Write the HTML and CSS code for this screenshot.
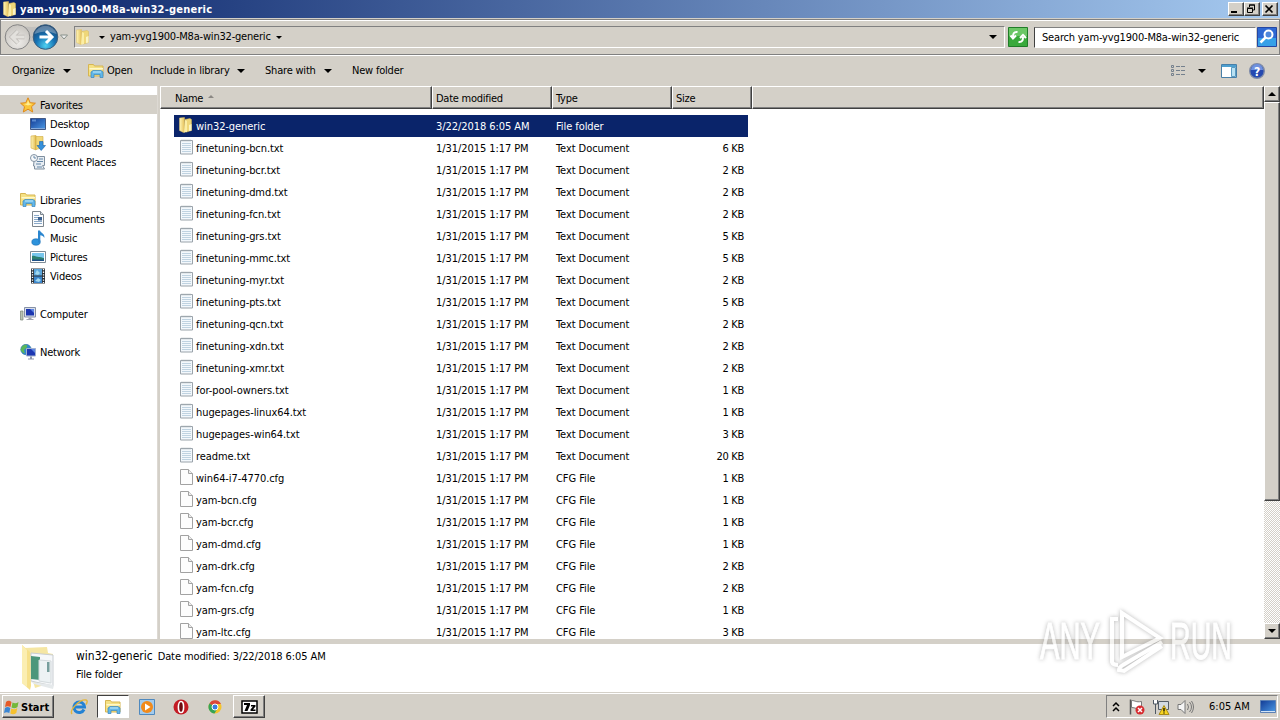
FILE: index.html
```html
<!DOCTYPE html>
<html lang="en">
<head>
  <meta charset="UTF-8">
  <title>yam-yvg1900-M8a-win32-generic</title>
  <link rel="stylesheet" href="styles.css">
</head>
<body>
  <svg class="defs" width="0" height="0">
    <defs>
      <linearGradient id="gold" x1="0" y1="0" x2="1" y2="0"><stop offset="0" stop-color="#fff6b8"/><stop offset="1" stop-color="#e2bb50"/></linearGradient>
      <linearGradient id="screen" x1="0" y1="0" x2="1" y2="1"><stop offset="0" stop-color="#123a94"/><stop offset="1" stop-color="#4d9be6"/></linearGradient>
      <radialGradient id="orb" cx=".5" cy=".85" r=".8"><stop offset="0" stop-color="#4fd0f0"/><stop offset=".5" stop-color="#1672b4"/><stop offset="1" stop-color="#1b4674"/></radialGradient>
      <radialGradient id="orb-off" cx=".5" cy=".7" r=".7"><stop offset="0" stop-color="#efedea"/><stop offset="1" stop-color="#c6c3be"/></radialGradient>
      <symbol id="folder" viewBox="0 0 16 16">
        <path d="M1.500 1l5-.5.500 14.500-1.500.5-4-2z" fill="url(#gold)" stroke="#e0c266" stroke-width=".5"/>
        <path d="M7 2.500l5-1 1.500 1v11l-5 1.500-1.500-1z" fill="#efd779" stroke="#d9b856" stroke-width=".5"/>
        <path d="M7 3l2 1v11l-3 .5z" fill="#fbeea6"/>
        <path d="M11 8l2.500-1v6.500l-2.500.5z" fill="#fbf4c4"/>
      </symbol>
      <symbol id="library" viewBox="0 0 16 16">
        <path d="M.5 1.500h5l1 1.500h8.500v10h-14.500z" fill="#f5e184" stroke="#d6b552"/>
        <path d="M1.500 5h13.500v1.500h-13.500z" fill="#fff8c8"/>
        <path d="M3 14.500v-5.500l2-1.500h8l2 1.500v5.500h-3v-3h-6v3z" fill="#63b7e8" stroke="#3885bd" stroke-width=".7"/>
        <path d="M5 9h8" stroke="#c5ebfb"/>
      </symbol>
      <symbol id="txt" viewBox="0 0 16 16">
        <path d="M2.500 1.500h12v13.500h-12z" fill="#f3f8fc" stroke="#9aa3aa"/>
        <path d="M4 .5v2m2-2v2m2-2v2m2-2v2m2-2v2" stroke="#a5adb4" stroke-width=".8"/>
        <path d="M4 4.500h9M4 6.500h9M4 8.500h9M4 10.500h9M4 12.500h9" stroke="#c0d3e1"/>
      </symbol>
      <symbol id="cfg" viewBox="0 0 16 16">
        <path d="M2.500.5h8l4 4v11h-12z" fill="#fdfdfd" stroke="#a2a2a2"/>
        <path d="M10.500.5v4h4" fill="#eee" stroke="#a2a2a2"/>
      </symbol>
      <symbol id="star" viewBox="0 0 16 16">
        <path d="M8 .8l2.200 4.900 5.200.5-3.900 3.500 1.200 5.300-4.700-2.800-4.700 2.800 1.200-5.300-3.900-3.500 5.200-.5z" fill="#fbc63a" stroke="#df8a1c"/>
        <path d="M8 3l1.300 3.500 3 .6-4.300 1.500-4-1.500 3-.6z" fill="#ffed92"/>
      </symbol>
      <symbol id="desktop" viewBox="0 0 16 16">
        <path d="M.5 2.500h15v11h-15z" fill="url(#screen)" stroke="#435a86"/>
        <path d="M1 12.500h14" stroke="#83a9dc"/><path d="M2 3.500h4v2h-4z" fill="#5a8bd0"/>
      </symbol>
      <symbol id="downloads" viewBox="0 0 16 16">
        <path d="M1 1l5-.5v14.500l-5-2z" fill="url(#gold)" stroke="#d0a83e" stroke-width=".6"/>
        <path d="M6 1.500h7v11l-7 2z" fill="#f1d878" stroke="#cfa940" stroke-width=".6"/>
        <path d="M9.500 6.500h3.500v4h2.500l-4.300 5-4.200-5h2.500z" fill="#3590db" stroke="#1b63a7" stroke-width=".6"/>
      </symbol>
      <symbol id="recent" viewBox="0 0 16 16">
        <path d="M4.500 2.500h10v9h-2l2 3.500h-10v-3h-1z" fill="#e7edf3" stroke="#7f8f9f"/>
        <circle cx="4" cy="4" r="3.500" fill="#f7f9fb" stroke="#8494a4"/>
        <path d="M4 1.800v2.200h2M9 5h4M7 7.500h6M6 10h5M7 13h5" stroke="#6487a7" fill="none"/>
      </symbol>
      <symbol id="documents" viewBox="0 0 16 16">
        <path d="M2.500.5h8l3 3v12h-11z" fill="#fbfcfd" stroke="#7c858d"/><path d="M10.500.5v3h3" fill="#d7e0e7" stroke="#7c858d"/>
        <path d="M4 4.500h5M4 6.500h4M4 8.500h4M4 10.500h8M4 12.500h8" stroke="#8aa9c9"/><path d="M8 6h4v3.500h-4z" fill="#3a608f"/>
      </symbol>
      <symbol id="music" viewBox="0 0 16 16">
        <ellipse cx="6" cy="12" rx="4.200" ry="3.200" fill="#2e93dc" stroke="#176aae" stroke-width=".6"/>
        <path d="M8 12.500v-12h2c.3 2.500 5.300 3 4.300 7.500-.8-2-2.300-2.500-4-2.700v7.200z" fill="#2b86cf"/>
      </symbol>
      <symbol id="pictures" viewBox="0 0 16 16">
        <path d="M.5 2.500h15v11h-15z" fill="#fff" stroke="#7e8b96"/><path d="M2 4h12v8h-12z" fill="#78c6ec"/>
        <path d="M2 12v-5c3-1 4 1 7 1s3 1 5 1v3z" fill="#2c806f"/><path d="M2 10.500h12v1.500h-12z" fill="#1d5087"/>
      </symbol>
      <symbol id="videos" viewBox="0 0 16 16">
        <path d="M1 .5h14v15h-14z" fill="#2a3139"/>
        <path d="M4 1h8v6.500h-8z" fill="#5aa6dc"/><path d="M4 8.500h8v6.500h-8z" fill="#3b86cc"/>
        <path d="M5 6l2-4 3 3-2 2zM5 13l3-3 3 2-2 2z" fill="#a3d9f0"/>
        <path d="M2.500 1v14M13.500 1v14" stroke="#fff" stroke-width="1.300" stroke-dasharray="1.300 1.300"/>
      </symbol>
      <symbol id="computer" viewBox="0 0 16 16">
        <path d="M.5 5h2.500v9h-2.500z" fill="#b9c4b4" stroke="#7a8577" stroke-width=".7"/>
        <path d="M4.500 1.500h11v9.500h-11z" fill="#d9dfea" stroke="#8590a6"/><path d="M6 3h8v6.500h-8z" fill="#1b36b0"/>
        <path d="M10 3h4v4z" fill="#5e86e4"/><path d="M8.500 11.500h3v1.500h2v1h-7v-1h2z" fill="#a0a5b2"/>
      </symbol>
      <symbol id="network" viewBox="0 0 16 16">
        <circle cx="6" cy="5.500" r="5.200" fill="#2f86cf" stroke="#316f9a" stroke-width=".6"/>
        <path d="M2 2.500c3-3 6-1.500 5 .5s-4 2-2.500 5-3 0-4-2z" fill="#5ab75a"/>
        <path d="M6.500 4.500h9v7.500h-9z" fill="#1c37b2" stroke="#a2b1d0"/><path d="M11 5h4v4z" fill="#5c86e2"/><path d="M10 12.500h2v2h2v1h-6v-1h2z" fill="#8d96ad"/>
      </symbol>
    </defs>
  </svg>

  <header class="title-bar">
    <svg class="icon"><use href="#folder"/></svg>
    <h1>yam-yvg1900-M8a-win32-generic</h1>
    <div class="window-buttons">
      <button class="bevel"><svg width="12" height="10"><path d="M2 7h6v2h-6z"/></svg></button>
      <button class="bevel"><svg width="12" height="10" fill="none" stroke="#000"><path d="M4.500 3v-2h5v5h-2M4 1h6M2.500 4.500h5v4h-5zM2 4h6"/></svg></button>
      <button class="bevel close"><svg width="12" height="10"><path d="M2.500 1.500l7 7m0-7l-7 7" stroke="#000" stroke-width="1.700"/></svg></button>
    </div>
  </header>

  <div class="address-bar">
    <svg class="nav" width="68" height="30">
      <path d="M14 3q14 4 28 0v20q-14-8-28 0z" fill="#c2c0bd"/>
      <circle cx="13.500" cy="15" r="12.300" fill="url(#orb-off)" stroke="#858585"/>
      <path d="M14 9l-6 6 6 6M8.500 15h12" fill="none" stroke="#bcb9b5" stroke-width="4.500"/>
      <path d="M14 9l-6 6 6 6M8.500 15h12" fill="none" stroke="#e3e1dd" stroke-width="3"/>
      <circle cx="41.500" cy="15" r="12.300" fill="url(#orb)" stroke="#3b5e7d"/>
      <path d="M30.500 12a11.500 11.500 0 0 1 22 0q-11-5-22 0z" fill="#fff" opacity=".3"/>
      <path d="M42 9l6 6-6 6M35.500 15h11" fill="none" stroke="#fff" stroke-width="3"/>
      <path d="M56.500 13h7l-3.500 4z" fill="#eee" stroke="#87908a"/>
    </svg>
    <div class="path">
      <svg class="icon"><use href="#folder"/></svg>
      <i class="caret small first"></i>
      <span>yam-yvg1900-M8a-win32-generic</span>
      <i class="caret small"></i>
      <i class="caret history"></i>
    </div>
    <svg class="refresh" width="20" height="20">
      <path d="M.5.5h19v19h-19z" fill="#39a93b" stroke="#207c28"/><path d="M1 1h18v8h-18z" fill="#6bc766"/>
      <path d="M9.500 5c-4-.5-4.500 2-4.500 5M2.500 8.500l2.500 3 3-3M10.500 15c4 .5 4.500-2 4.500-5M12 11l3-3 3 3" fill="none" stroke="#fff" stroke-width="2"/>
    </svg>
    <div class="search"><span>Search yam-yvg1900-M8a-win32-generic</span></div>
    <svg class="search-button" width="20" height="20">
      <path d="M.5.5h19v19h-19z" fill="#2e68d3" stroke="#2547a2"/><path d="M1 11h18v8h-18z" fill="#36a0e8"/>
      <circle cx="11.500" cy="7.500" r="4" fill="#4f87dc" stroke="#fff" stroke-width="2"/><path d="M8.500 10.500l-5 5" stroke="#fff" stroke-width="2.500"/>
    </svg>
  </div>

  <nav class="toolbar">
    <span class="organize">Organize</span><i class="caret"></i>
    <svg class="icon"><use href="#library"/></svg><span class="open">Open</span>
    <span class="include">Include in library</span><i class="caret"></i>
    <span class="share">Share with</span><i class="caret"></i>
    <span class="new-folder">New folder</span>
    <div class="view-tools">
      <svg width="16" height="14" fill="none"><path d="M1.500 1.500h2v2h-2zM1.500 5.500h2v2h-2zM1.500 9.500h2v2h-2z" stroke="#74808d"/><path d="M6 2.500h4m1 0h4M6 6.500h4m1 0h4M6 10.500h4m1 0h4" stroke="#74808d"/></svg>
      <i class="caret"></i>
      <svg class="pane" width="16" height="14"><path d="M.5.5h15v13h-15z" fill="#fff" stroke="#477fa8"/><path d="M1 1h14v2h-14z" fill="#4d9fcf"/><path d="M10.500 3.500h4v9h-4z" fill="#b9e1f3" stroke="#5b9bc1"/></svg>
      <svg class="help" width="16" height="16"><circle cx="8" cy="8" r="7.300" fill="#2549b0" stroke="#7e8ba8" stroke-width="1.400"/><path d="M2 7a6 6 0 0 1 12 0z" fill="#6f91df"/><text x="8" y="12.500" text-anchor="middle">?</text></svg>
    </div>
  </nav>

  <main class="explorer">
    <aside class="sidebar">
      <ul>
        <li class="root active"><svg class="icon"><use href="#star"/></svg>Favorites</li>
        <li><svg class="icon"><use href="#desktop"/></svg>Desktop</li>
        <li><svg class="icon"><use href="#downloads"/></svg>Downloads</li>
        <li><svg class="icon"><use href="#recent"/></svg>Recent Places</li>
      </ul>
      <ul>
        <li class="root"><svg class="icon"><use href="#library"/></svg>Libraries</li>
        <li><svg class="icon"><use href="#documents"/></svg>Documents</li>
        <li><svg class="icon"><use href="#music"/></svg>Music</li>
        <li><svg class="icon"><use href="#pictures"/></svg>Pictures</li>
        <li><svg class="icon"><use href="#videos"/></svg>Videos</li>
      </ul>
      <ul><li class="root"><svg class="icon"><use href="#computer"/></svg>Computer</li></ul>
      <ul><li class="root"><svg class="icon"><use href="#network"/></svg>Network</li></ul>
    </aside>

    <section class="files">
      <div class="columns">
        <div class="col name">Name <i class="sort"></i></div>
        <div class="col date">Date modified</div>
        <div class="col type">Type</div>
        <div class="col size">Size</div>
        <div class="col rest"></div>
      </div>
      <div class="rows" id="rows"></div>
    </section>

    <div class="scrollbar">
      <div class="bevel arrow"><i class="caret up"></i></div>
      <div class="bevel thumb"></div>
      <div class="track"></div>
      <div class="bevel arrow"><i class="caret"></i></div>
    </div>
  </main>

  <section class="details">
    <svg width="48" height="48">
      <path d="M10 4l23-1 1 6 5 1v28l-18 6z" fill="#f5e6a3"/>
      <path d="M17 9l22 2v31l-22-5z" fill="#f6f8fa" stroke="#c8cdd2"/>
      <path d="M17 12l9 1v23l-9-1z" fill="#4d977b"/>
      <path d="M25 16l12 1v22l-12-2z" fill="#edf2f4" stroke="#d4dadd"/>
      <path d="M33 18h2.500v10h-2.500z" fill="#779e9d"/>
      <path d="M17 38l23 3-1 4-19-5z" fill="#e5e9eb"/>
      <path d="M8 1l8 7 1 34-1 4-8-7z" fill="#f6e08a"/><path d="M8 1l5 5v37l-5-4z" fill="#fbeeb2"/>
    </svg>
    <div class="info">
      <p><span class="big">win32-generic</span> <span class="meta">Date modified: 3/22/2018 6:05 AM</span></p>
      <p>File folder</p>
    </div>
  </section>

  <footer class="taskbar">
    <div class="bevel start">
      <svg width="16" height="16"><path d="M2 3c2-2 4-1 5.500 0l-1 5c-2-1-3.500-1-5.500 0z" fill="#e65b28"/><path d="M8.500 3.500c2 1 4 1 6-.5l-1 5c-2 1.500-4 1.500-6 .5z" fill="#73b83b"/><path d="M1 9c2-1.500 3.500-1 5.300 0l-1 5c-1.800-1-3.300-1-5.300 0z" fill="#3b86d3"/><path d="M7.300 9.500c2 1 4 1 6-.5l-1 5c-2 1.500-4 1.500-6 .5z" fill="#f6c12e"/></svg>
      <span>Start</span>
    </div>
    <div class="task ie">
      <svg width="18" height="18" fill="none">
        <path d="M14 11.500a5.300 5.300 0 1 1 .5-2.500h-9" stroke="#2382d4" stroke-width="3"/>
        <path d="M2 16c-3-4 8-15 14-14 2 .5 1 3 0 4.500" stroke="#e5b63a" stroke-width="1.400"/>
      </svg>
    </div>
    <div class="task current"><svg class="icon"><use href="#library"/></svg></div>
    <div class="task player"><svg width="16" height="16"><path d="M.5.5h15v15h-15z" fill="#a3cbed" stroke="#4f89be"/><circle cx="8" cy="8" r="6" fill="#f18a1b"/><path d="M6 4.500l5.500 3.500-5.500 3.500z" fill="#fff"/></svg></div>
    <div class="task"><svg width="16" height="16"><circle cx="8" cy="8" r="7.500" fill="#c31b24"/><ellipse cx="8" cy="8" rx="2.600" ry="5.500" fill="#6c0a10" stroke="#fff" stroke-width="1.600"/></svg></div>
    <div class="task"><svg width="16" height="16"><circle cx="8" cy="8" r="6.500" fill="#f5c42c"/><path d="M8 8l-5.600-3.400a6.500 6.500 0 0 1 11.600.4h-6z" fill="#dc4638"/><path d="M8 8l-5.600-3.400a6.500 6.500 0 0 0 5.100 9.900l3-5z" fill="#36a456"/><circle cx="8" cy="8" r="3" fill="#3b7de0" stroke="#fff"/></svg></div>
    <div class="task bevel"><svg width="17" height="14"><path d="M1 1h15v12h-15z" fill="#fff" stroke="#000" stroke-width="1.500"/><path d="M3 3h6v2l-2.500 6h-3l2.500-6h-3zM10 5h4.500v1.500l-2.500 3h2.500v1.500h-5v-1.500l2.500-3h-2z"/></svg></div>
    <div class="tray">
      <svg width="8" height="12" fill="none" stroke="#000" stroke-width="1.500"><path d="M1 5l3-3 3 3M1 10l3-3 3 3"/></svg>
      <svg class="flag" width="16" height="16"><path d="M1.500.5v15" stroke="#555" stroke-width="1.500"/><path d="M2.500 1.500c4 0 4 2 10 1v7c-5 1-6-1-10-1z" fill="#fff" stroke="#777"/><circle cx="11" cy="11" r="4.500" fill="#d72b2f"/><path d="M9 9l4 4m0-4l-4 4" stroke="#fff" stroke-width="1.500"/></svg>
      <svg class="net" width="17" height="16"><path d="M5.500 2.500h10v8h-10z" fill="#d3dae1" stroke="#555e67"/><path d="M.5 1v4h4v-4M2.500 5v10" fill="#fff" stroke="#4e5862"/><path d="M11 6.500l5 9h-10z" fill="#f8d421" stroke="#a88a1a"/><path d="M11 9v3.500m0 1v1" stroke="#000" stroke-width="1.300"/></svg>
      <svg class="sound" width="18" height="16"><path d="M1 5.500h3l4-4v13l-4-4h-3z" fill="#f5f5f5" stroke="#777"/><path d="M10.500 5q2 3 0 6M12.500 3q4 5 0 10M14.500 2q4 6 0 12" fill="none" stroke="#777"/></svg>
      <span class="clock">6:05 AM</span>
      <svg class="show-desktop" width="17" height="14"><path d="M.5.500h15v12h-15z" fill="url(#screen)" stroke="#5d81b5"/><path d="M1 11.500h14" stroke="#d3e4f5"/></svg>
    </div>
  </footer>

  <svg class="watermark" width="240" height="90">
    <text x="4" y="57" textLength="60" lengthAdjust="spacingAndGlyphs">ANY</text>
    <path d="M82 17h-6v43q1 3 6 3M86 11v44l38-19zM126 40l-39 23q-4 2-4 5l5 1 38-25"/>
    <text x="134" y="57" textLength="62" lengthAdjust="spacingAndGlyphs">RUN</text>
  </svg>

  <script src="script.js"></script>
</body>
</html>
```

FILE: styles.css
```css
:root {
  --face: #d4d0c8;
  --shadow: #808080;
  --dark: #404040;
  --navy: #0a246a;
}

* {
  margin: 0;
  padding: 0;
  box-sizing: border-box;
}

body {
  width: 1280px;
  height: 720px;
  overflow: hidden;
  display: flex;
  flex-direction: column;
  position: relative;
  background: var(--face);
  color: #000;
  font-family: Tahoma, "DejaVu Sans Condensed", "DejaVu Sans", sans-serif;
  font-stretch: condensed;
  font-size: 11px;
  line-height: 14px;
  letter-spacing: -0.2px;
  white-space: nowrap;
}

svg {
  display: block;
  flex: none;
}

.defs {
  position: absolute;
}

.icon {
  width: 16px;
  height: 16px;
}

.bevel {
  background: var(--face);
  border: 1px solid;
  border-color: #fff var(--dark) var(--dark) #fff;
  box-shadow: inset -1px -1px 0 var(--shadow);
}

.caret {
  flex: none;
  border: 4px solid transparent;
  border-top-color: #000;
  border-bottom: 0;
}

.caret.small {
  border-width: 3px;
  border-bottom: 0;
}

.caret.up {
  border-top: 0;
  border-bottom: 4px solid #000;
}

/* Title bar */
.title-bar {
  height: 18px;
  flex: none;
  display: flex;
  align-items: center;
  padding: 0 2px;
  background: linear-gradient(to right, var(--navy), #a6caf0);
  color: #fff;
}

.title-bar h1 {
  margin-left: 2px;
  padding-top: 1px;
  font-size: 11px;
  letter-spacing: 0.22px;
}

.window-buttons {
  display: flex;
  margin-left: auto;
}

.window-buttons button {
  width: 16px;
  height: 14px;
}

.window-buttons .close {
  margin-left: 2px;
}

/* Address bar */
.address-bar {
  height: 36px;
  flex: none;
  display: flex;
  align-items: center;
  margin-top: 1px;
  padding-left: 3px;
  border: 1px solid var(--shadow);
  box-shadow: inset 0 1px 0 #fff;
}

.path {
  width: 931px;
  height: 22px;
  flex: none;
  display: flex;
  align-items: center;
  margin-left: 2px;
  border: 1px solid var(--shadow);
  border-bottom-color: #fff;
  border-right-color: #fff;
}

.path .caret {
  margin: 0 5px;
}

.path .first {
  margin-left: 8px;
}

.path .history {
  margin: 0 7px 0 auto;
}

.refresh {
  margin-left: 3px;
}

.search {
  width: 222px;
  height: 21px;
  flex: none;
  margin: 0 1px 0 6px;
  padding: 3px 7px;
  background: #fff;
  border: 1px solid var(--shadow);
  border-color: var(--shadow) #fff #fff var(--dark);
  letter-spacing: -0.18px;
}

/* Toolbar */
.toolbar {
  height: 31px;
  flex: none;
  display: flex;
  align-items: center;
  padding-left: 12px;
  border-top: 1px solid #fff;
}

.organize {
  width: 51px;
}

.toolbar > .icon {
  margin-left: 17px;
}

.open {
  width: 43px;
  margin-left: 3px;
}

.include {
  width: 87px;
}

.share {
  width: 59px;
  margin-left: 20px;
}

.new-folder {
  margin-left: 20px;
}

.view-tools {
  display: flex;
  align-items: center;
  margin-left: auto;
  padding-right: 15px;
}

.view-tools .caret {
  margin: 0 15px 0 12px;
}

.pane {
  margin-right: 12px;
}

.help text {
  fill: #fff;
  font-size: 12px;
  font-weight: bold;
}

/* Explorer body */
.explorer {
  height: 553px;
  flex: none;
  display: flex;
}

.sidebar {
  width: 158px;
  padding-top: 9px;
  background: #fff;
  border-right: 1px solid #ddd9d3;
}

.sidebar ul {
  list-style: none;
  margin-bottom: 19px;
}

.sidebar li {
  height: 19px;
  display: flex;
  align-items: center;
  gap: 4px;
  padding: 2px 0 0 30px;
}

.sidebar .icon {
  margin-top: -2px;
}

.sidebar .root {
  padding-left: 20px;
}

.sidebar .active {
  background: var(--face);
}

.files {
  width: 1104px;
  margin-left: 2px;
  overflow: hidden;
  background: #fff;
}

.columns {
  height: 23px;
  display: flex;
}

.col {
  width: 120px;
  padding: 5px 3px 0;
  background: var(--face);
  border: 1px solid;
  border-color: #fff var(--dark) var(--dark) #fff;
  box-shadow: inset -1px -1px 0 var(--shadow);
  letter-spacing: -0.25px;
}

.col.name {
  width: 272px;
  padding-left: 14px;
}

.col.size {
  width: 80px;
}

.col.rest {
  flex: 1;
}

.sort {
  display: inline-block;
  margin: 0 0 4px 2px;
  border: 3px solid transparent;
  border-top: 0;
  border-bottom-color: #8b8884;
}

.rows {
  width: 574px;
  margin: 6px 0 0 14px;
}

.row {
  height: 22px;
  display: flex;
  align-items: center;
  padding: 2px 4px 0;
  letter-spacing: -0.07px;
}

.row.selected {
  background: var(--navy);
  color: #fff;
}

.row .icon {
  margin: -4px 2px 0 0;
}

.row .name {
  width: 240px;
}

.row .date,
.row .type {
  width: 120px;
}

.row .size {
  flex: 1;
  text-align: right;
  letter-spacing: -0.3px;
}

.scrollbar {
  width: 16px;
  display: flex;
  flex-direction: column;
}

.arrow {
  height: 16px;
  display: flex;
  align-items: center;
  justify-content: center;
}

.thumb {
  height: 399px;
}

.track {
  flex: 1;
  background: repeating-conic-gradient(#fff 0 25%, var(--face) 0 50%) 0 0 / 2px 2px;
}

/* Details pane */
.details {
  height: 48px;
  flex: none;
  display: flex;
  margin-top: 5px;
  padding-left: 14px;
  background: #fff;
}

.info {
  padding: 3px 0 0 14px;
}

.info p {
  height: 19px;
  line-height: 18px;
}

.info .big {
  margin-right: 2px;
  font-size: 12px;
  letter-spacing: 0;
}

.meta {
  letter-spacing: -0.1px;
}

/* Taskbar */
.taskbar {
  flex: 1;
  display: flex;
  align-items: center;
  margin-top: 1px;
  padding: 1px 2px 2px;
  border-top: 1px solid #fff;
}

.start {
  width: 52px;
  height: 23px;
  display: flex;
  align-items: center;
  gap: 1px;
  margin-right: 9px;
  padding: 2px 0 0 1px;
  font-weight: bold;
  letter-spacing: 0;
}

.start svg {
  margin-top: -2px;
}

.task {
  width: 32px;
  height: 23px;
  display: flex;
  align-items: center;
  justify-content: center;
  margin-right: 2px;
}

.task.current {
  background: #fff;
  border: 1px solid;
  border-color: var(--dark) #fff #fff var(--dark);
}

.tray {
  width: 172px;
  height: 23px;
  display: flex;
  align-items: center;
  margin-left: auto;
  padding-left: 5px;
  border: 1px solid;
  border-color: var(--shadow) #fff #fff var(--shadow);
}

.flag {
  margin-left: 9px;
}

.net {
  margin-left: 8px;
}

.sound {
  margin-left: 7px;
}

.clock {
  width: 42px;
  margin-left: 14px;
  padding-top: 1px;
  letter-spacing: 0;
}

.show-desktop {
  margin-left: 9px;
}

.watermark {
  position: absolute;
  left: 1036px;
  top: 602px;
  overflow: visible;
  fill: #fff;
  opacity: 0.7;
  filter: drop-shadow(0 0 2px #999);
}

.watermark text {
  font-family: "Liberation Sans", Arial, sans-serif;
  font-size: 52px;
  letter-spacing: 0;
  stroke: #fff;
  stroke-width: 1;
}

.watermark path {
  fill: none;
  stroke: #fff;
  stroke-width: 4;
}
```

FILE: script.js
```js
const TXT = "Text Document";
const CFG = "CFG File";

const files = [
  ["finetuning-bcn.txt", TXT, 6],
  ["finetuning-bcr.txt", TXT, 2],
  ["finetuning-dmd.txt", TXT, 2],
  ["finetuning-fcn.txt", TXT, 2],
  ["finetuning-grs.txt", TXT, 5],
  ["finetuning-mmc.txt", TXT, 5],
  ["finetuning-myr.txt", TXT, 2],
  ["finetuning-pts.txt", TXT, 5],
  ["finetuning-qcn.txt", TXT, 2],
  ["finetuning-xdn.txt", TXT, 2],
  ["finetuning-xmr.txt", TXT, 2],
  ["for-pool-owners.txt", TXT, 1],
  ["hugepages-linux64.txt", TXT, 1],
  ["hugepages-win64.txt", TXT, 3],
  ["readme.txt", TXT, 20],
  ["win64-i7-4770.cfg", CFG, 1],
  ["yam-bcn.cfg", CFG, 1],
  ["yam-bcr.cfg", CFG, 1],
  ["yam-dmd.cfg", CFG, 1],
  ["yam-drk.cfg", CFG, 2],
  ["yam-fcn.cfg", CFG, 2],
  ["yam-grs.cfg", CFG, 1],
  ["yam-ltc.cfg", CFG, 3]
];

function row(icon, name, date, type, size, selected) {
  return `<div class="row${selected ? " selected" : ""}">
    <svg class="icon"><use href="#${icon}"/></svg>
    <span class="name">${name}</span>
    <span class="date">${date}</span>
    <span class="type">${type}</span>
    <span class="size">${size}</span>
  </div>`;
}

document.getElementById("rows").innerHTML =
  row("folder", "win32-generic", "3/22/2018 6:05 AM", "File folder", "", true) +
  files.map(([name, type, kb]) =>
    row(type === TXT ? "txt" : "cfg", name, "1/31/2015 1:17 PM", type, kb + " KB")
  ).join("");
```
